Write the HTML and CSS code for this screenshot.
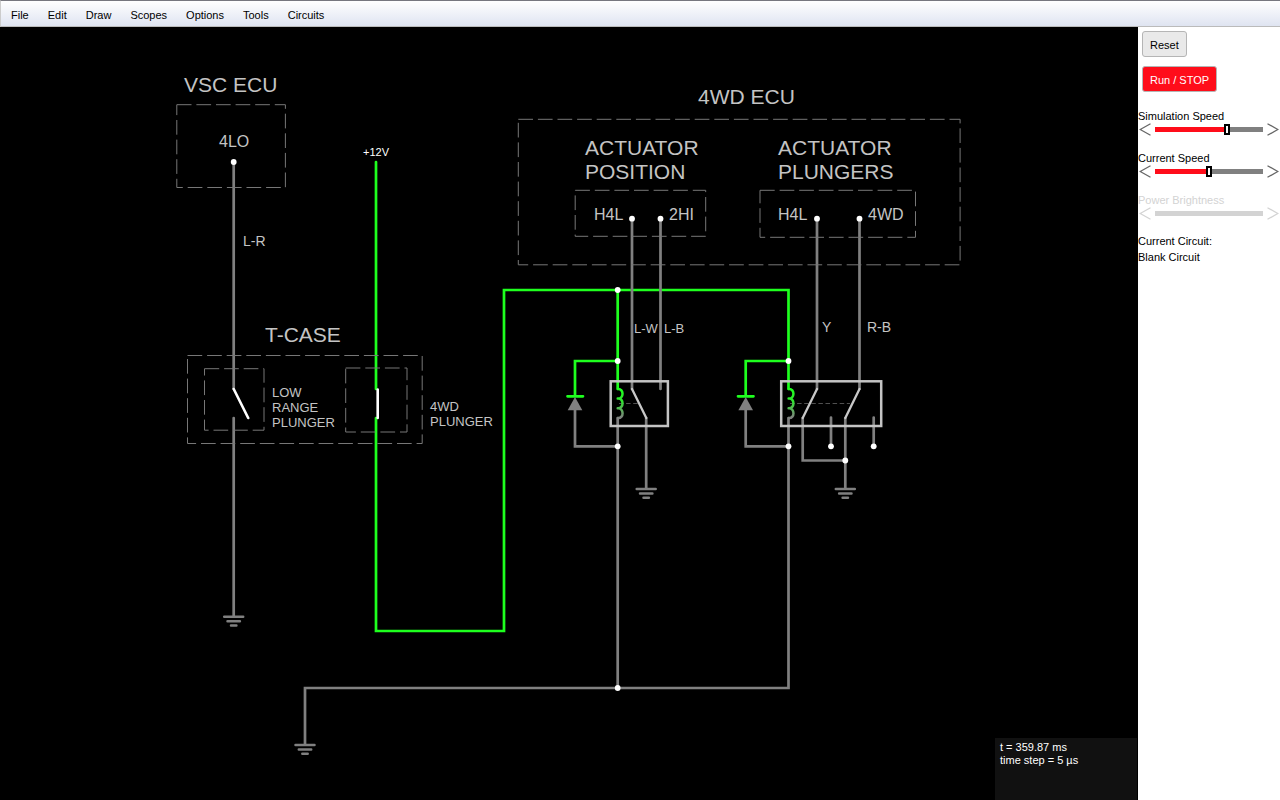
FILE: index.html
```html
<!DOCTYPE html>
<html lang="en">
<head>
<meta charset="utf-8">
<title>Circuit Simulator</title>
<link rel="stylesheet" href="styles.css">
</head>
<body>
<nav class="menubar">
  <button class="menu" type="button">File</button>
  <button class="menu" type="button">Edit</button>
  <button class="menu" type="button">Draw</button>
  <button class="menu" type="button">Scopes</button>
  <button class="menu" type="button">Options</button>
  <button class="menu" type="button">Tools</button>
  <button class="menu" type="button">Circuits</button>
</nav>
<div class="workspace">
  <main class="stage">
    <svg class="circuit" viewBox="0 27 1138 773" preserveAspectRatio="xMinYMin meet" role="img" aria-label="Circuit diagram">
      <defs>
        <linearGradient id="coil-fade" gradientUnits="userSpaceOnUse" x1="0" y1="389" x2="0" y2="418">
          <stop offset="0" stop-color="#1eff1e"/>
          <stop offset="0.4" stop-color="#2fe62f"/>
          <stop offset="1" stop-color="#808080"/>
        </linearGradient>
        <path id="coil" d="M0 389C6 388.600 6.200 399 -0.300 398.600M0 398.600C6 398 6.200 408.700 -0.300 408.300M0 408.300C6 407.900 6.200 418.400 0 418"/>
        <path id="ground" d="M-9.500 0H9.500M-6.200 4.500H6.200M-2.700 8.800H2.700"/>
      </defs>

      <g class="live">
        <path d="M376 162V389M376 418V631H504V290H788.500V389"/>
        <path d="M617.700 290V389M617.700 361H575V396M567.500 396.300H583"/>
        <path d="M788.500 361H745.700V396M738 396.300H753.500"/>
      </g>

      <g class="idle">
        <path d="M233.700 162V389M233.700 418V616"/>
        <path d="M632 219V389M660.500 219V389M646.200 418V488"/>
        <path d="M575 409V446.300H617.700M617.700 418V688"/>
        <path d="M745.700 409V446.300H788.500M788.500 418V688H305V744"/>
        <path d="M817 219V389M859.500 219V389"/>
        <path d="M802.700 418V460.500H845.300M845.300 418V488"/>
        <path d="M831 417.500V446M873.700 417.500V446"/>
      </g>

      <g class="ground">
        <use href="#ground" x="233.700" y="616.800"/>
        <use href="#ground" x="305" y="745"/>
        <use href="#ground" x="646.200" y="489"/>
        <use href="#ground" x="845.300" y="489"/>
      </g>

      <g class="anode">
        <path d="M575 397L582.300 410.300H567.700Z"/>
        <path d="M745.700 397L753 410.300H738.400Z"/>
      </g>

      <g class="relay">
        <rect x="610.700" y="381.300" width="57.200" height="44.700"/>
        <rect x="781.200" y="381.300" width="100" height="44.700"/>
      </g>
      <g class="linkage">
        <path d="M619 403.500H639M790 403.500H850"/>
      </g>
      <g class="coil">
        <use href="#coil" x="618"/>
        <use href="#coil" x="788.900"/>
      </g>
      <g class="contact">
        <path d="M632 389L646.300 418M817 389L802.700 418M859.500 389L845.300 418"/>
      </g>
      <g class="lever">
        <path d="M233.700 389L248.200 418M377.700 389.500V418"/>
      </g>

      <g class="frame">
        <rect x="176.800" y="104.700" width="108.600" height="82.800"/>
        <rect x="187.500" y="355.500" width="234.700" height="88"/>
        <rect x="204.500" y="368.700" width="59.500" height="61.500"/>
        <rect x="345.700" y="368" width="61.300" height="64"/>
        <rect x="518.300" y="119.300" width="441.800" height="145.500"/>
        <rect x="575.200" y="190.300" width="130.500" height="46"/>
        <rect x="760" y="190.300" width="155.500" height="47"/>
      </g>

      <g class="node">
        <circle cx="233.700" cy="162" r="2.900"/>
        <circle cx="632" cy="218.700" r="2.900"/>
        <circle cx="660.500" cy="218.700" r="2.900"/>
        <circle cx="817" cy="218.700" r="2.900"/>
        <circle cx="859.500" cy="218.700" r="2.900"/>
        <circle cx="617.700" cy="290" r="2.900"/>
        <circle cx="617.700" cy="361" r="2.900"/>
        <circle cx="788.500" cy="361" r="2.900"/>
        <circle cx="617.700" cy="446.300" r="2.900"/>
        <circle cx="788.500" cy="446.300" r="2.900"/>
        <circle cx="831" cy="446.300" r="2.900"/>
        <circle cx="873.700" cy="446.300" r="2.900"/>
        <circle cx="845.300" cy="460.500" r="2.900"/>
        <circle cx="617.700" cy="688" r="2.900"/>
      </g>

      <g class="title">
        <text x="184" y="92">VSC ECU</text>
        <text x="265" y="342">T-CASE</text>
        <text x="698" y="104">4WD ECU</text>
        <text x="585" y="155">ACTUATOR</text>
        <text x="585" y="179">POSITION</text>
        <text x="778" y="155">ACTUATOR</text>
        <text x="778" y="179">PLUNGERS</text>
      </g>
      <g class="pin">
        <text x="219" y="147">4LO</text>
        <text x="594" y="220">H4L</text>
        <text x="669" y="220">2HI</text>
        <text x="778" y="220">H4L</text>
        <text x="868" y="220">4WD</text>
      </g>
      <g class="wire-name">
        <text x="243" y="246">L-R</text>
        <text x="822" y="332">Y</text>
        <text x="867" y="332">R-B</text>
      </g>
      <g class="note">
        <text x="634" y="333">L-W</text>
        <text x="664" y="333">L-B</text>
        <text x="272" y="397">LOW</text>
        <text x="272" y="412">RANGE</text>
        <text x="272" y="427">PLUNGER</text>
        <text x="430" y="411">4WD</text>
        <text x="430" y="426">PLUNGER</text>
      </g>
      <text class="supply" x="376" y="156">+12V</text>
    </svg>
    <div class="status">
      <p>t = 359.87 ms</p>
      <p>time step = 5 µs</p>
    </div>
  </main>

  <aside class="panel">
    <button class="action reset" type="button">Reset</button>
    <button class="action run" type="button">Run / STOP</button>
    <div class="control">
      <label for="sim-speed">Simulation Speed</label>
      <div class="scroll">
        <button class="step" type="button" aria-label="Slower simulation"><svg viewBox="0 0 12 13"><path d="M11.500 .7L1.200 6.500L11.500 12.300"/></svg></button>
        <input class="slider" id="sim-speed" type="range" min="0" max="100" value="68" style="--fill: 67%">
        <button class="step" type="button" aria-label="Faster simulation"><svg viewBox="0 0 12 13"><path d="M.5 .7L10.800 6.500L.5 12.300"/></svg></button>
      </div>
    </div>
    <div class="control">
      <label for="cur-speed">Current Speed</label>
      <div class="scroll">
        <button class="step" type="button" aria-label="Slower current"><svg viewBox="0 0 12 13"><path d="M11.500 .7L1.200 6.500L11.500 12.300"/></svg></button>
        <input class="slider" id="cur-speed" type="range" min="0" max="100" value="50" style="--fill: 50%">
        <button class="step" type="button" aria-label="Faster current"><svg viewBox="0 0 12 13"><path d="M.5 .7L10.800 6.500L.5 12.300"/></svg></button>
      </div>
    </div>
    <div class="control off">
      <label for="brightness">Power Brightness</label>
      <div class="scroll">
        <button class="step" type="button" disabled aria-label="Dimmer"><svg viewBox="0 0 12 13"><path d="M11.500 .7L1.200 6.500L11.500 12.300"/></svg></button>
        <input class="slider" id="brightness" type="range" min="0" max="100" value="50" disabled>
        <button class="step" type="button" disabled aria-label="Brighter"><svg viewBox="0 0 12 13"><path d="M.5 .7L10.800 6.500L.5 12.300"/></svg></button>
      </div>
    </div>
    <div class="current">
      <p>Current Circuit:</p>
      <p>Blank Circuit</p>
    </div>
  </aside>
</div>
</body>
</html>
```
FILE: styles.css
```css
* {
  box-sizing: border-box;
}

body {
  margin: 0;
  height: 100vh;
  display: flex;
  flex-direction: column;
  overflow: hidden;
  font-family: "Liberation Sans", Arial, sans-serif;
  font-size: 11px;
  color: #000;
  background: #fff;
}

p {
  margin: 0;
}

button {
  font: inherit;
  color: inherit;
  margin: 0;
}

.menubar {
  flex: none;
  display: flex;
  gap: 1px;
  height: 27px;
  padding: 1px 1px 0;
  border-top: 1px solid #77777f;
  border-left: 1px solid #ccc;
  border-bottom: 1px solid #bbb;
  background: linear-gradient(#fff, #dfe4f1);
}

.menu {
  padding: 1px 9px 0;
  border: 0;
  background: none;
}

.workspace {
  flex: 1;
  min-height: 0;
  display: flex;
}

.stage {
  position: relative;
  flex: 1;
  min-width: 0;
  background: #000;
}

.circuit {
  display: block;
  width: 100%;
  height: 100%;
  fill: none;
  stroke-linecap: round;
  font-family: "Liberation Sans", Arial, sans-serif;
}

.live {
  stroke: #1eff1e;
  stroke-width: 2.7;
}

.idle {
  stroke: #808080;
  stroke-width: 2.7;
}

.ground {
  stroke: #808080;
  stroke-width: 2.5;
}

.anode {
  fill: #808080;
}

.relay {
  stroke: #c4c4c4;
  stroke-width: 2.5;
}

.linkage {
  stroke: #505050;
  stroke-width: 1;
  stroke-linecap: butt;
  stroke-dasharray: 4.500 2.600;
}

.coil {
  stroke: url(#coil-fade);
  stroke-width: 2.500;
}

.contact {
  stroke: #c8c8c8;
  stroke-width: 2.300;
}

.lever {
  stroke: #fff;
  stroke-width: 2.600;
}

.frame {
  stroke: #777;
  stroke-width: 1;
  stroke-linecap: butt;
  stroke-dasharray: 14.700 4.900;
}

.node {
  fill: #fff;
}

.title,
.pin,
.wire-name,
.note {
  fill: #c4c4c4;
}

.title {
  font-size: 21px;
}

.pin {
  font-size: 16px;
}

.wire-name {
  font-size: 14px;
}

.note {
  font-size: 13px;
}

.supply {
  fill: #fff;
  font-size: 11px;
  text-anchor: middle;
}

.status {
  position: absolute;
  right: 1px;
  bottom: 0;
  width: 142px;
  height: 62px;
  padding: 3px 5px;
  line-height: 13px;
  color: #fff;
  background: #111;
}

.panel {
  flex: none;
  width: 142px;
  display: flex;
  flex-direction: column;
  align-items: flex-start;
}

.action {
  height: 26px;
  margin: 4px 4px 0;
  padding: 1px 7px 0;
  border: 1px solid #b5b5b5;
  border-radius: 3px;
  background: #e9e9e9;
}

.run {
  margin: 9px 4px 17px;
  color: #fff;
  background: #ff0d1a;
}

.control {
  width: 100%;
  height: 42px;
}

.control label {
  display: block;
  line-height: 14px;
}

.scroll {
  display: flex;
  align-items: center;
  justify-content: space-between;
  height: 13px;
  padding: 0 1px;
}

.step {
  width: 12px;
  height: 13px;
  padding: 0;
  border: 0;
  background: none;
}

.step svg {
  display: block;
  width: 12px;
  height: 13px;
  fill: none;
  stroke: #666;
  stroke-width: 1.300;
}

.slider {
  appearance: none;
  flex: 1;
  min-width: 0;
  height: 13px;
  margin: 0 4px;
  background: none;
}

.slider::-webkit-slider-runnable-track {
  height: 5px;
  background: linear-gradient(to right, #ff0d1a var(--fill, 0%), #808080 var(--fill, 0%));
}

.slider::-webkit-slider-thumb {
  appearance: none;
  width: 6px;
  height: 11px;
  margin-top: -3px;
  border: 2px solid #000;
  background: #fff;
}

.off {
  color: #d3d3d3;
}

.off .step svg {
  stroke: #d3d3d3;
}

.off .slider::-webkit-slider-runnable-track {
  background: #d3d3d3;
}

.off .slider::-webkit-slider-thumb {
  visibility: hidden;
}

.current {
  margin-top: -2px;
  line-height: 16px;
}
```
